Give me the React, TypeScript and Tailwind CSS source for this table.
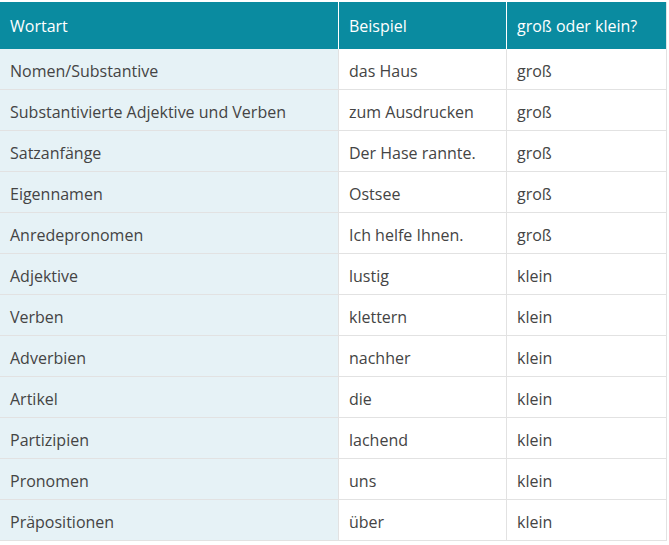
import React from "react";

const rows: [string, string, string][] = [
  ["Nomen/Substantive", "das Haus", "groß"],
  ["Substantivierte Adjektive und Verben", "zum Ausdrucken", "groß"],
  ["Satzanfänge", "Der Hase rannte.", "groß"],
  ["Eigennamen", "Ostsee", "groß"],
  ["Anredepronomen", "Ich helfe Ihnen.", "groß"],
  ["Adjektive", "lustig", "klein"],
  ["Verben", "klettern", "klein"],
  ["Adverbien", "nachher", "klein"],
  ["Artikel", "die", "klein"],
  ["Partizipien", "lachend", "klein"],
  ["Pronomen", "uns", "klein"],
  ["Präpositionen", "über", "klein"],
];

export default function App() {
  return (
    <div
      className="w-[669px] h-[545px] bg-white pt-[2px]"
      style={{ fontFamily: '"Open Sans", sans-serif' }}
    >
      <div className="w-[667px] border-r border-[#e2e2e2]">
        <div className="grid grid-cols-[339px_168px_159px] h-[47px] bg-[#0a8ba0] text-white text-[16px]">
          <div className="flex items-center pl-[10px] border-r border-white">Wortart</div>
          <div className="flex items-center pl-[10px] border-r border-white">Beispiel</div>
          <div className="flex items-center pl-[10px]">groß oder klein?</div>
        </div>
        {rows.map((r, i) => (
          <div
            key={i}
            className="grid grid-cols-[339px_168px_159px] h-[41px] border-b border-[#e2e2e2] text-[16px] text-[#444]"
          >
            <div className="flex items-center pl-[10px] pt-[3px] bg-[#e6f2f6] border-r border-[#e2e2e2]">{r[0]}</div>
            <div className="flex items-center pl-[10px] pt-[3px] border-r border-[#e2e2e2]">{r[1]}</div>
            <div className="flex items-center pl-[10px] pt-[3px]">{r[2]}</div>
          </div>
        ))}
      </div>
    </div>
  );
}
